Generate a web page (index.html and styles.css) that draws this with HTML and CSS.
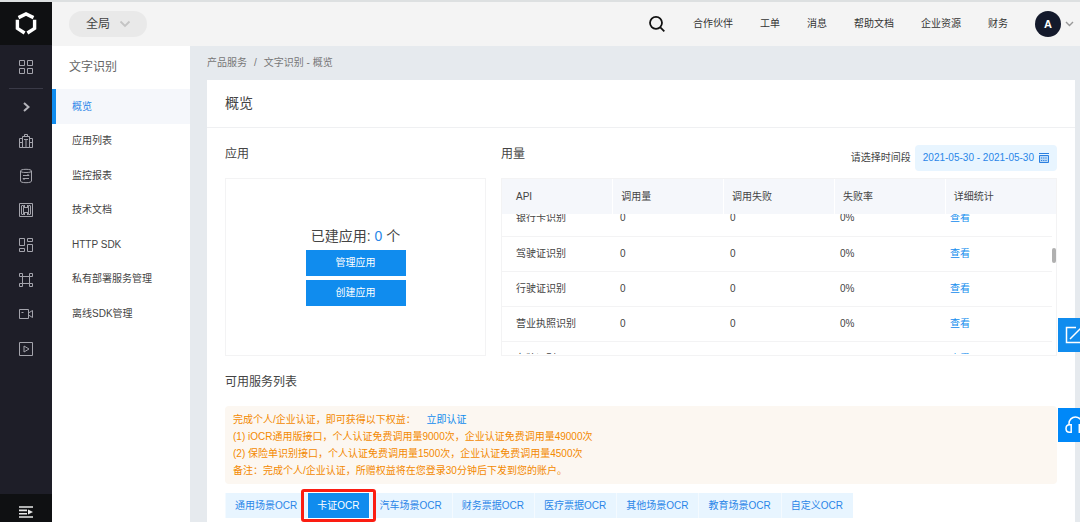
FILE: index.html
```html
<!DOCTYPE html>
<html lang="zh-CN">
<head>
<meta charset="utf-8">
<title>文字识别 - 概览</title>
<link rel="stylesheet" href="styles.css">
</head>
<body>
<div class="app">
  <aside class="rail">
    <a class="rail-logo" href="#">
      <svg width="22" height="24" viewBox="0 0 22 24" fill="none" stroke="#fff" stroke-width="3.400">
        <path d="M3.500 5.600 L11 2 L18.500 5.600"/>
        <path d="M2.400 7.800 V16.400 L9.600 21"/>
        <path d="M19.600 7.800 V16.400 L12.400 21"/>
      </svg>
    </a>
    <a class="rail-item rail-home" href="#">
      <svg class="icon" viewBox="0 0 16 16"><path d="M1.500 1.500h5v5h-5zM9.500 1.500h5v5h-5zM1.500 9.500h5v5h-5zM9.500 9.500h5v5h-5z"/></svg>
    </a>
    <a class="rail-item rail-expand" href="#">
      <svg class="icon bold" viewBox="0 0 16 16"><path d="M6 4l4.500 4L6 12"/></svg>
    </a>
    <nav class="rail-list">
      <a class="rail-item" href="#"><svg class="icon" viewBox="0 0 16 16"><path d="M1.500 5.500h3v9h-3zM11.500 5.500h3v9h-3zM4.500 3.500h7v11h-7zM6.500 3.500v-2h3v2M6 6.500h4M8 6.500v8M2 9.500h2M12 9.500h2"/></svg></a>
      <a class="rail-item" href="#"><svg class="icon" viewBox="0 0 16 16"><path d="M2.500 3v10c0 1 2 1.700 5.500 1.700s5.500-.7 5.500-1.700V3c0-1-2-1.700-5.500-1.700S2.500 2 2.500 3c0 1 2 1.500 5.500 1.500S13.500 4 13.500 3M5 7.500h6L9.500 6M11 10.500H5L6.500 12"/></svg></a>
      <a class="rail-item" href="#"><svg class="icon" viewBox="0 0 16 16"><path d="M1.500 1.500h13v13h-13zM5.500 5.500h5v5h-5zM3.500 3.500h2v2M12.500 3.500h-2v2M3.500 12.500h2v-2M12.500 12.500h-2v-2M3.500 4v8M12.500 4v8M6.500 3v2M9.500 3v2M6.500 11v2M9.500 11v2"/></svg></a>
      <a class="rail-item" href="#"><svg class="icon" viewBox="0 0 16 16"><path d="M1.500 1.500h5v7h-5zM9.500 1.500h5v3h-5zM1.500 11.500h5v3h-5zM9.500 7.500h5v7h-5z"/></svg></a>
      <a class="rail-item" href="#"><svg class="icon" viewBox="0 0 16 16"><path d="M1.500 1.500h3v3h-3zM11.500 1.500h3v3h-3zM1.500 11.500h3v3h-3zM11.500 11.500h3v3h-3zM4.500 4.500h7v7h-7z"/></svg></a>
      <a class="rail-item" href="#"><svg class="icon" viewBox="0 0 16 16"><path d="M1.500 3.500h9v9h-9zM10.500 7l4-2.500v7l-4-2.500M3.500 6.500h2"/></svg></a>
      <a class="rail-item" href="#"><svg class="icon" viewBox="0 0 16 16"><path d="M1.500 1.500h13v13h-13zM6 5l5 3-5 3z"/></svg></a>
    </nav>
    <a class="rail-foot" href="#">
      <svg width="14" height="12" viewBox="0 0 14 12" fill="none" stroke="#e8e8e8" stroke-width="1.600"><path d="M0 1h14M0 4.400h8M0 7.700h8M0 11h14"/><path d="M9 3.500l5 2.500-5 2.500z" fill="#e8e8e8" stroke="none"/></svg>
    </a>
  </aside>

  <div class="shell">
    <header class="topbar">
      <button class="region" type="button">全局
        <svg width="12" height="8" viewBox="0 0 12 8" fill="none" stroke="#c4c4c4" stroke-width="1.800"><path d="M1.500 1.500L6 6l4.500-4.500"/></svg>
      </button>
      <button class="search" type="button" aria-label="搜索">
        <svg width="18" height="18" viewBox="0 0 18 18" fill="none" stroke="#111" stroke-width="1.800"><circle cx="8" cy="7.800" r="6"/><path d="M12.300 12.300l4 4"/></svg>
      </button>
      <nav class="topnav">
        <a href="#">合作伙伴</a><a href="#">工单</a><a href="#">消息</a><a href="#">帮助文档</a><a href="#">企业资源</a><a href="#">财务</a>
      </nav>
      <button class="user" type="button"><span class="avatar">A</span>
        <svg width="9" height="6" viewBox="0 0 9 6" fill="none" stroke="#999" stroke-width="1.400"><path d="M1 1l3.500 3.500L8 1"/></svg>
      </button>
    </header>

    <div class="body">
      <aside class="side">
        <div class="side-title">文字识别</div>
        <a class="side-item active" href="#">概览</a>
        <nav class="side-list">
          <a class="side-item" href="#">应用列表</a>
          <a class="side-item" href="#">监控报表</a>
          <a class="side-item" href="#">技术文档</a>
          <a class="side-item" href="#">HTTP SDK</a>
          <a class="side-item" href="#">私有部署服务管理</a>
          <a class="side-item" href="#">离线SDK管理</a>
        </nav>
      </aside>

      <main class="main">
        <div class="crumbs"><a href="#">产品服务</a><span>/</span><a href="#">文字识别 - 概览</a></div>
        <div class="card">
          <h1 class="card-title">概览</h1>
          <div class="card-body">
            <div class="columns">
              <section>
                <div class="section-head"><h2>应用</h2></div>
                <div class="apps">
                  <p>已建应用: <a href="#">0</a> 个</p>
                  <button type="button">管理应用</button>
                  <button type="button">创建应用</button>
                </div>
              </section>
              <section>
                <div class="section-head">
                  <h2>用量</h2>
                  <div class="range">
                    <span id="range-label">请选择时间段</span>
                    <button type="button" aria-labelledby="range-label range-value"><span id="range-value">2021-05-30 - 2021-05-30</span>
                      <svg width="10" height="10" viewBox="0 0 10 10" fill="none" stroke="#2a7fe0"><path d="M0 .5h10"/><path d="M.5 2.500h9v7h-9z" fill="#b9d9f8"/><path d="M2 5h6M2 7.500h6" stroke-dasharray="1.200 1"/></svg>
                    </button>
                  </div>
                </div>
                <div class="usage">
                  <table class="usage-head">
                    <thead><tr><th>API</th><th>调用量</th><th>调用失败</th><th>失败率</th><th>详细统计</th></tr></thead>
                  </table>
                  <div class="usage-view">
                    <table class="usage-rows">
                      <tbody>
                        <tr><td>银行卡识别</td><td>0</td><td>0</td><td>0%</td><td><a href="#">查看</a></td></tr>
                        <tr><td>驾驶证识别</td><td>0</td><td>0</td><td>0%</td><td><a href="#">查看</a></td></tr>
                        <tr><td>行驶证识别</td><td>0</td><td>0</td><td>0%</td><td><a href="#">查看</a></td></tr>
                        <tr><td>营业执照识别</td><td>0</td><td>0</td><td>0%</td><td><a href="#">查看</a></td></tr>
                        <tr><td>车牌识别</td><td>0</td><td>0</td><td>0%</td><td><a href="#">查看</a></td></tr>
                      </tbody>
                    </table>
                    <div class="thumb"></div>
                  </div>
                </div>
              </section>
            </div>

            <div class="section-head"><h2>可用服务列表</h2></div>
            <div class="notice">
              <p>完成个人/企业认证，即可获得以下权益： <a href="#">立即认证</a></p>
              <p>(1) iOCR通用版接口，个人认证免费调用量9000次，企业认证免费调用量49000次</p>
              <p>(2) 保险单识别接口，个人认证免费调用量1500次，企业认证免费调用量4500次</p>
              <p>备注：完成个人/企业认证，所赠权益将在您登录30分钟后下发到您的账户。</p>
            </div>
            <div class="tabs">
              <button type="button">通用场景OCR</button>
              <button type="button" class="current">卡证OCR</button>
              <button type="button">汽车场景OCR</button>
              <button type="button">财务票据OCR</button>
              <button type="button">医疗票据OCR</button>
              <button type="button">其他场景OCR</button>
              <button type="button">教育场景OCR</button>
              <button type="button">自定义OCR</button>
            </div>
          </div>
        </div>
      </main>
    </div>
  </div>
</div>

<div class="floats">
  <button type="button" aria-label="反馈"><svg width="20" height="18" viewBox="0 0 20 18" fill="none" stroke="#fff" stroke-width="1.500"><path d="M11 1.500H1.500v15h15V9M5 13L17 1"/></svg></button>
  <button type="button" class="help" aria-label="客服"><svg width="20" height="18" viewBox="0 0 20 18" fill="none" stroke="#fff" stroke-width="1.500"><path d="M4 9V7.500a6.500 6.500 0 0 1 13 0V9M6.200 8.700v7.600H4.500C2 16.300 1 14.500 1 12.500s1.300-3.800 3.500-3.800zM14.300 8.700v7.600H16c2 0 3-1.800 3-3.800s-1-3.800-3-3.800z"/></svg></button>
</div>
</body>
</html>
```

FILE: styles.css
```css
* { box-sizing: border-box; }

body {
  margin: 0;
  font: 10px/16px "Liberation Sans", "Noto Sans CJK SC", sans-serif;
  color: #444;
  background: #e6eaee;
}

a { color: inherit; text-decoration: none; }
h1, h2, p { margin: 0; font-weight: 400; }
button { font: inherit; color: inherit; border: 0; padding: 0; background: none; cursor: pointer; }
svg { display: block; flex: none; }

.app {
  display: flex;
  height: 100vh;
  overflow: hidden;
  border-top: 2px solid #dde0e1;
}

/* Icon rail */
.rail {
  flex: 0 0 52px;
  display: flex;
  flex-direction: column;
  background: #1e1e28;
}
.rail-logo {
  height: 43px;
  display: grid;
  place-items: center;
  background: #0f1012;
}
.rail-item { display: grid; place-items: center; }
.rail-home { height: 44px; margin: 0 9px; border-bottom: 1px solid #3a3a47; }
.rail-expand { height: 35px; }
.rail-list { display: grid; grid-auto-rows: 1fr; height: 242px; }
.rail-foot {
  height: 28px;
  padding-top: 8px;
  margin-top: auto;
  display: grid;
  place-items: center;
  background: #0f1012;
}
.icon { width: 16px; height: 16px; fill: none; stroke: #a4a4ac; stroke-width: 1; }
.icon.bold { stroke: #b4b4ba; stroke-width: 2; }

/* Top bar */
.shell { flex: 1; min-width: 0; display: flex; flex-direction: column; }
.topbar {
  flex: none;
  height: 44px;
  display: flex;
  align-items: center;
  padding: 0 6px 0 17px;
  background: #f4f4f4;
  color: #333;
}
.region {
  display: flex;
  align-items: center;
  gap: 9px;
  height: 26px;
  padding: 0 16px 0 17px;
  border-radius: 13px;
  background: #e9e9e9;
  font-size: 12px;
  color: #444;
}
.search { margin-left: auto; margin-right: 27px; }
.topnav { display: flex; gap: 27px; }
.user { display: flex; align-items: center; gap: 4px; margin-left: 27px; }
.avatar {
  width: 26px;
  height: 26px;
  border-radius: 50%;
  background: #141a2c;
  color: #fff;
  font-weight: 700;
  font-size: 11px;
  line-height: 26px;
}

/* Product menu */
.body { flex: 1; min-height: 0; display: flex; }
.side { flex: 0 0 138px; background: #fff; }
.side-title { height: 43px; padding-left: 17px; line-height: 42px; font-size: 12px; color: #666; }
.side-list { display: grid; grid-auto-rows: 1fr; height: 207px; }
.side-item { display: flex; align-items: center; padding-left: 20px; }
.side-item.active {
  height: 35px;
  padding-left: 16px;
  border-left: 4px solid #108cee;
  background: #f5f7fb;
  color: #2a86e8;
}

/* Content */
.main { flex: 1; min-width: 0; display: flex; flex-direction: column; padding: 0 5px 0 17px; }
.crumbs { display: flex; gap: 7px; height: 34px; line-height: 33px; color: #777; }
.card { flex: 1; background: #fff; }
.card-title {
  height: 48px;
  padding-left: 18px;
  line-height: 47px;
  font-size: 14px;
  border-bottom: 1px solid #eff0f2;
}
.card-body { padding: 0 18px; }
.columns { display: grid; grid-template-columns: 261fr 556fr; gap: 15px; }
.section-head { display: flex; align-items: center; justify-content: space-between; height: 50px; }
.section-head h2 { padding-top: 2px; font-size: 12px; }

.apps {
  height: 178px;
  padding-bottom: 3px;
  display: flex;
  flex-direction: column;
  align-items: center;
  justify-content: center;
  gap: 4px;
  border: 1px solid #f3f3f4;
}
.apps p { font-size: 14px; line-height: 20px; }
.apps a { color: #2a86e8; }
.apps button { width: 100px; height: 26px; background: #108cee; color: #fff; }

.range { display: flex; align-items: center; gap: 4px; padding-top: 9px; }
.range button {
  display: flex;
  align-items: center;
  gap: 5px;
  height: 26px;
  padding: 0 8px;
  border-radius: 4px;
  background: #e8f5ff;
  color: #2a86e8;
}

.usage { height: 178px; border: 1px solid #f3f3f4; }
.usage table { table-layout: fixed; border-collapse: collapse; }
.usage th, .usage td { padding: 0 0 0 8px; text-align: left; font-weight: 400; height: 35px; }
.usage th:first-child, .usage td:first-child { padding-left: 14px; }
.usage-head { width: 100%; background: #f5f7fb; }
.usage th + th { border-left: 1px solid #fff; }
.usage-view { position: relative; height: 140px; overflow: hidden; padding-right: 4px; }
.usage-rows { width: 100%; margin-top: -13px; }
.usage td { border-bottom: 1px solid #f3f3f4; }
.usage td a { color: #108cee; }
.thumb {
  position: absolute;
  top: 34px;
  right: 0;
  width: 4px;
  height: 15px;
  border-radius: 2px;
  background: #b0b0b0;
}

.notice {
  padding: 5px 8px;
  border-radius: 4px;
  background: #fcf7f1;
  color: #f38900;
  line-height: 17px;
}
.notice a { margin-left: 8px; color: #108cee; }

.tabs { display: flex; margin-top: 9px; }
.tabs button {
  height: 25px;
  padding: 0 10px 0 9px;
  border-left: 1px solid #f4faff;
  background: #e8f5ff;
  color: #2a86e8;
}
.tabs .current { position: relative; background: #108cee; color: #fff; }
.tabs .current::after {
  content: "";
  position: absolute;
  inset: -4px -7px;
  border: 3px solid #fb1d12;
  border-radius: 3px;
}

/* Shortcuts docked to the window edge */
.floats { position: fixed; top: 318px; right: 0; display: grid; gap: 56px; }
.floats button {
  display: flex;
  align-items: center;
  width: 22px;
  height: 34px;
  padding-left: 7px;
  overflow: hidden;
  background: #108cee;
}
.floats .help { background: #0088f8; }
```
